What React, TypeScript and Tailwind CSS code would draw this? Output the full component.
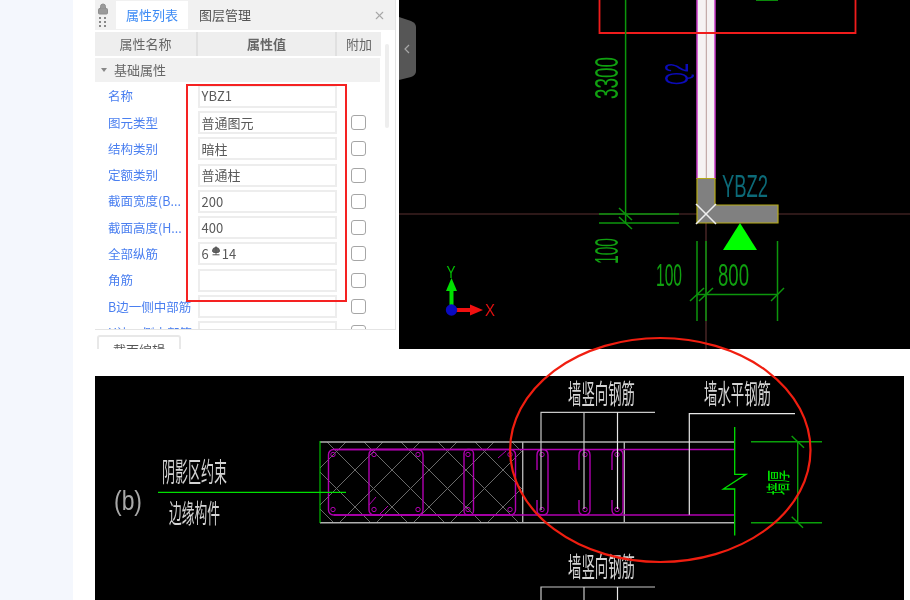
import { Lock, X } from "lucide-react";

const rows = [
  ["名称", "YBZ1", false],
  ["图元类型", "普通图元", true],
  ["结构类别", "暗柱", true],
  ["定额类别", "普通柱", true],
  ["截面宽度(B...", "200", true],
  ["截面高度(H...", "400", true],
  ["全部纵筋", "6|14", true],
  ["角筋", "", true],
  ["B边一侧中部筋", "", true],
  ["H边一侧中部筋", "", true],
] as const;

const cjk = "[font-family:'Noto_Sans_CJK_SC',sans-serif]";
const thin = "[font-family:'Liberation_Sans',sans-serif]";

function CadLabel({ x, y, w, size, text, fill = "#d4d4d4" }: { x: number; y: number; w: number; size: number; text: string; fill?: string }) {
  return (
    <text x={x} y={y} fontSize={size} fill={fill} textLength={w} lengthAdjust="spacingAndGlyphs" className={cjk}>
      {text}
    </text>
  );
}

function Num({ x, y, w, size, text, fill = "#10a010", rotate }: { x: number; y: number; w: number; size: number; text: string; fill?: string; rotate?: boolean }) {
  return (
    <text
      x={x}
      y={y}
      fontSize={size}
      fill={fill}
      textLength={w}
      lengthAdjust="spacingAndGlyphs"
      transform={rotate ? `rotate(-90 ${x} ${y})` : undefined}
      className={thin}
    >
      {text}
    </text>
  );
}

function TopCad() {
  return (
    <svg viewBox="399 0 511 349" className="block h-full w-full blur-[0.25px]">
      <line x1="399" y1="214" x2="910" y2="214" stroke="#5a3030" strokeWidth="1.2" />
      <line x1="706" y1="214" x2="706" y2="349" stroke="#5a3030" strokeWidth="1.2" />
      <rect x="697" y="-2" width="18" height="181" fill="#f6f2f2" />
      <line x1="697" y1="0" x2="697" y2="179" stroke="#c93ac9" strokeWidth="1.5" />
      <line x1="715" y1="0" x2="715" y2="179" stroke="#c93ac9" strokeWidth="1.5" />
      <line x1="706.3" y1="0" x2="706.3" y2="179" stroke="#b99a98" strokeWidth="1" />
      <rect x="756" y="-1" width="22" height="2" fill="#0a8a0a" />
      <polyline points="599.5,-2 599.5,33 855.5,33 855.5,-2" fill="none" stroke="#f01c1c" strokeWidth="1.8" />
      <line x1="625.6" y1="0" x2="625.6" y2="224" stroke="#0c960c" strokeWidth="1.5" />
      <g stroke="#0c960c" strokeWidth="1.5">
        <line x1="599" y1="214" x2="679" y2="214" />
        <line x1="599" y1="223" x2="679" y2="223" />
        <line x1="619" y1="208" x2="632" y2="220" />
        <line x1="619" y1="217" x2="632" y2="229" />
        <line x1="697" y1="241" x2="697" y2="321" />
        <line x1="706" y1="241" x2="706" y2="321" />
        <line x1="777.5" y1="241" x2="777.5" y2="321" />
        <line x1="697" y1="294.5" x2="778" y2="294.5" />
        <line x1="690" y1="301" x2="704" y2="288" />
        <line x1="699" y1="301" x2="713" y2="288" />
        <line x1="771" y1="301" x2="784" y2="288" />
      </g>
      <polygon points="697,178.5 715,178.5 715,205 778,205 778,223 697,223" fill="#808080" stroke="#b5a914" strokeWidth="1.2" />
      <g stroke="#eeeeee" strokeWidth="1.6">
        <line x1="696" y1="204" x2="716" y2="224" />
        <line x1="716" y1="204" x2="696" y2="224" />
      </g>
      <polygon points="740,223 757,250 723,250" fill="#00ff00" />
      <Num x={722} y={197} w={46} size={31} text="YBZ2" fill="#0c6a78" />
      <Num x={618} y={99} w={42} size={33} text="3300" rotate />
      <Num x={688} y={85} w={22} size={33} text="Q2" fill="#0b0bb8" rotate />
      <Num x={618} y={264} w={26} size={33} text="100" rotate />
      <Num x={656} y={286} w={26} size={32} text="100" />
      <Num x={718} y={286} w={31} size={32} text="800" />
      <rect x="449.5" y="290" width="4" height="20" fill="#00e000" />
      <polygon points="451.5,278 457,291 446,291" fill="#00e000" />
      <rect x="451" y="308" width="21" height="4" fill="#f01010" />
      <polygon points="483,310 470,304.5 470,315.5" fill="#f01010" />
      <circle cx="451.5" cy="310" r="5.7" fill="#0a0ac0" />
      <Num x={446.5} y={278} w={9} size={16} text="Y" fill="#00c000" />
      <Num x={485} y={316} w={10} size={16} text="X" fill="#e01010" />
      <path d="M399 17 L411 21 Q416 23 416 27 L416 71 Q416 75 411 77 L399 80 Z" fill="#565656" />
      <polyline points="409,45 405,49 409,53" fill="none" stroke="#a8a8a8" strokeWidth="1.2" />
    </svg>
  );
}

const dotsX = [333, 374, 418, 468, 510, 542, 585, 617];

function BottomCad() {
  return (
    <svg viewBox="95 376 809 224" className="block h-full w-full blur-[0.25px]">
      <defs>
        <clipPath id="hatch">
          <rect x="320" y="442" width="203" height="81" />
        </clipPath>
      </defs>
      <g clipPath="url(#hatch)" stroke="#6a6a6a" strokeWidth="1">
        {[-263, -226, -189, -152, -115, -78, -41, -4, 33, 70, 107, 144].map((d) => (
          <line key={d} x1={300} y1={300 - d} x2={560} y2={560 - d} />
        ))}
        {[751, 788, 825, 862, 899, 936, 973, 1010, 1047].map((s) => (
          <line key={s} x1={300} y1={s - 300} x2={560} y2={s - 560} />
        ))}
      </g>
      <g stroke="#b0b0b0" strokeWidth="1.4" fill="none">
        <line x1="320" y1="442" x2="734" y2="442" />
        <line x1="320" y1="522.7" x2="734" y2="522.7" />
        <line x1="522.7" y1="442" x2="522.7" y2="522.7" />
        <line x1="624.3" y1="442" x2="624.3" y2="522.7" />
      </g>
      <g stroke="#b000b0" fill="none" strokeWidth="1.4">
        <line x1="334" y1="449.5" x2="734" y2="449.5" />
        <line x1="334" y1="515" x2="734" y2="515" />
        <rect x="328.5" y="449.5" width="187" height="65.5" rx="5" />
        <rect x="369" y="449.5" width="54" height="65.5" rx="5" />
        <rect x="464" y="449.5" width="9.5" height="65.5" rx="4" />
        <path d="M537 470 V455 Q537 449.5 542.5 449.5 Q548 449.5 548 455 V510 Q548 515 542.5 515 Q537 515 537 510 V500" />
        <path d="M579 470 V455 Q579 449.5 584.5 449.5 Q590 449.5 590 455 V510 Q590 515 584.5 515 Q579 515 579 510 V500" />
        <path d="M612 470 V455 Q612 449.5 617.5 449.5 Q623 449.5 623 455 V510 Q623 515 617.5 515 Q612 515 612 510 V500" />
        {dotsX.map((x) => (
          <g key={x}>
            <circle cx={x} cy={454.5} r={2.2} strokeWidth="1" />
            <circle cx={x} cy={509.5} r={2.2} strokeWidth="1" />
          </g>
        ))}
        <line x1="369" y1="505" x2="376" y2="497" strokeWidth="1" />
        <line x1="380" y1="514" x2="388" y2="506" strokeWidth="1" />
        <line x1="498" y1="458" x2="506" y2="451" strokeWidth="1" />
      </g>
      <line x1="320" y1="441" x2="320" y2="523" stroke="#00e000" strokeWidth="1" />
      <line x1="158" y1="492.3" x2="346" y2="492.3" stroke="#00e000" strokeWidth="1.2" />
      <g stroke="#e8e8e8" strokeWidth="1.2" fill="none">
        <polyline points="541,510 541,412.3 655,412.3" stroke="#c8c8c8" />
        <line x1="584" y1="412.3" x2="584" y2="509" stroke="#c8c8c8" />
        <line x1="617.5" y1="412.3" x2="617.5" y2="509" />
        <polyline points="689.3,514.7 689.3,413.7 795,413.7" />
        <polyline points="541,600 541,587 655,587" stroke="#c8c8c8" />
        <line x1="584" y1="587" x2="584" y2="600" stroke="#c8c8c8" />
        <line x1="617.5" y1="587" x2="617.5" y2="600" />
      </g>
      <polyline points="734.7,427 734.7,474.3 746,474.3 723.3,489 734.7,489 734.7,535.5" fill="none" stroke="#00e000" strokeWidth="1.3" />
      <g stroke="#0aa00a" strokeWidth="1.4">
        <line x1="751" y1="441.7" x2="822" y2="441.7" />
        <line x1="751" y1="522.7" x2="822" y2="522.7" />
        <line x1="797.7" y1="441.7" x2="797.7" y2="522.7" />
        <line x1="791.7" y1="436" x2="804" y2="447.7" />
        <line x1="791.7" y1="516.7" x2="803" y2="527.7" />
      </g>
      <text
        x="787"
        y="495"
        fontSize="24"
        fill="#00e000"
        textLength="25"
        lengthAdjust="spacingAndGlyphs"
        transform="rotate(-90 787 495)"
        className={cjk}
      >
        墙厚
      </text>
      <text x="114" y="510" fontSize="28" fill="#a8a8a8" textLength="28" lengthAdjust="spacingAndGlyphs" className={thin}>
        (b)
      </text>
      <CadLabel x={162} y={482} w={65} size={27} text="阴影区约束" />
      <CadLabel x={169} y={523} w={51} size={26} text="边缘构件" />
      <CadLabel x={568} y={404} w={67} size={27} text="墙竖向钢筋" />
      <CadLabel x={704} y={404} w={67} size={27} text="墙水平钢筋" />
      <CadLabel x={568} y={577} w={67} size={27} text="墙竖向钢筋" />
    </svg>
  );
}

function RebarValue() {
  return (
    <span className="flex items-center">
      6
      <svg viewBox="0 0 10 10" className="ml-[2px] mr-px mb-[5px] h-[10px] w-[10px]">
        <path d="M1.5 5 Q1.5 1.5 5 1.5 Q8.5 1.5 8.5 5 Q8.5 6.5 6 6.5 L4 6.5 Q1.5 6.5 1.5 5 Z M1.5 8.8 H8.5 M5 0.3 V8.8" fill="#666" stroke="#555" strokeWidth="1" />
      </svg>
      14
    </span>
  );
}

function Panel() {
  return (
    <div className="relative flex h-[330px] w-[301px] shrink-0 flex-col overflow-hidden border-r border-b border-[#e4e4e4] bg-white blur-[0.35px]">
      <div className="flex h-[30px] shrink-0 items-center bg-[#f1f1f1]">
        <div className="flex w-[21px] flex-col items-center gap-[2px] pr-[6px] text-[#8f8f8f]">
          <Lock size={12} fill="#9a9a9a" strokeWidth={2} />
          <div className="grid grid-cols-2 gap-x-[3px] gap-y-[2px]">
            {[0, 1, 2, 3, 4, 5].map((i) => (
              <span key={i} className="h-[2px] w-[2px] bg-[#888]" />
            ))}
          </div>
        </div>
        <div className="flex h-[28px] w-[72px] items-center justify-center bg-white text-[13px] text-[#3d8bf5]">属性列表</div>
        <div className="ml-[11px] text-[13px] text-[#555]">图层管理</div>
        <X size={13} className="ml-auto mr-[9px] text-[#a8a8a8]" />
      </div>
      <div className="mt-[2px] flex h-[24px] w-[286px] shrink-0 items-center bg-[#eeeeee] text-center text-[13px] text-[#666]">
        <div className="flex h-full w-[103px] items-center justify-center border-r-2 border-[#e0e0e0]">属性名称</div>
        <div className="flex h-full w-[139px] items-center justify-center border-r-2 border-[#e0e0e0] font-bold">属性值</div>
        <div className="flex h-full flex-1 items-center justify-center">附加</div>
      </div>
      <div className="mt-[2px] flex h-[24px] w-[285px] shrink-0 items-center bg-[#f1f1f1] text-[13px] text-[#666]">
        <span className="ml-[6px] mr-[7px] h-0 w-0 border-x-[3px] border-t-[4px] border-x-transparent border-t-[#888]" />
        基础属性
      </div>
      <div className="mt-px">
        {rows.map(([label, value, check]) => (
          <div key={label} className="flex h-[26.3px] items-center">
            <div className="w-[103px] overflow-hidden whitespace-nowrap pl-[13px] pt-px text-[12.5px] text-[#4a7ff0]">{label}</div>
            <div className="flex h-[23px] w-[139px] items-center border-2 border-[#ededed] pl-[1.5px] text-[13px] text-[#5a5a5a]">
              {value === "6|14" ? <RebarValue /> : value}
            </div>
            {check && <div className="ml-[14px] h-[15px] w-[15px] rounded-[3px] border border-[#a6a6a6]" />}
          </div>
        ))}
      </div>
      <div className="absolute right-[6px] top-[44px] h-[84px] w-[4px] rounded-full bg-[#eeeeee]" />
    </div>
  );
}

export default function App() {
  return (
    <div className={`relative flex h-[600px] w-[910px] overflow-hidden bg-white ${cjk}`}>
      <div className="h-full w-[73px] shrink-0 bg-[#f4f7fd]" />
      <div className="flex h-full flex-1 flex-col pl-[22px]">
        <div className="flex h-[349px] shrink-0 overflow-hidden">
          <div className="flex w-[304px] shrink-0 flex-col">
            <Panel />
            <div className="ml-[2px] mt-[5px] flex h-[30px] w-[84px] justify-center rounded-t-[3px] border-2 border-[#e8e8e8] pt-[3px] text-[13px] text-[#555] blur-[0.3px]">
              截面编辑
            </div>
          </div>
          <div className="h-full flex-1 bg-black">
            <TopCad />
          </div>
        </div>
        <div className="mt-[27px] h-[224px] w-[809px] bg-black">
          <BottomCad />
        </div>
      </div>
      <div className="absolute left-[186px] top-[84px] h-[218px] w-[161px] border-2 border-[#f52222]" />
      <svg viewBox="0 0 910 600" className="pointer-events-none absolute inset-0 h-[600px] w-[910px]">
        <ellipse cx="660.3" cy="450" rx="150.2" ry="112" fill="none" stroke="#f01e10" strokeWidth="2.2" />
      </svg>
    </div>
  );
}
